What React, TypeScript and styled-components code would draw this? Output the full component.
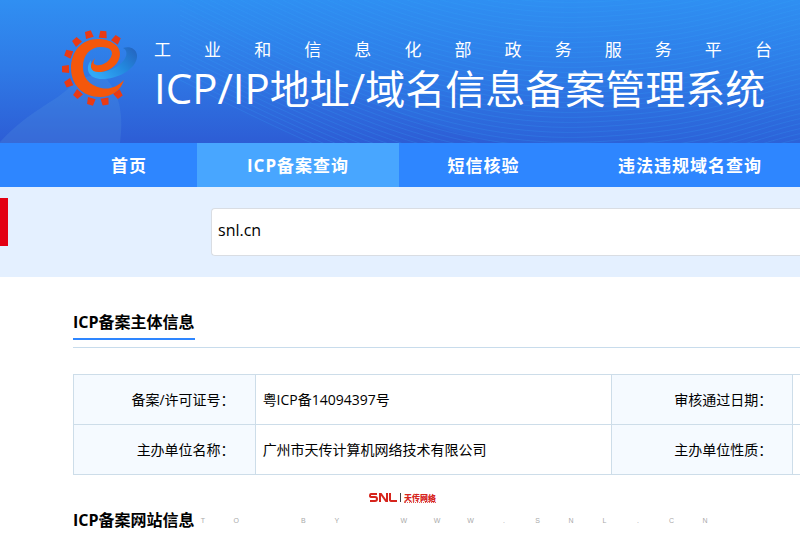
import React from "react";
import styled, { createGlobalStyle } from "styled-components";

const GlobalStyle = createGlobalStyle`
  * { box-sizing: border-box; }
  html { overflow: hidden; }
  body {
    margin: 0;
    background: #fff;
    color: #000;
    font-family: "Open Sans", "Noto Sans CJK SC", sans-serif;
    font-size: 14px;
  }
`;

const Page = styled.div`
  position: relative;
  overflow: hidden;
  height: 100vh;
`;

const Banner = styled.header`
  position: relative;
  display: flex;
  height: 143px;
  padding: 28px 24px 0 62px;
  background: linear-gradient(180deg, #308ff2 0%, #2f7ae6 48%, #2d5dd5 100%);
  color: #fff;
`;

const BannerArt = styled.svg`
  position: absolute;
  inset: 0;
  width: 100%;
  height: 100%;
`;

const Emblem = styled.svg`
  position: relative;
  flex: none;
  width: 80px;
  height: 80px;
`;

const Titles = styled.div`
  position: relative;
  flex: none;
  margin-left: 12px;
  white-space: nowrap;
`;

const Ministry = styled.div`
  display: flex;
  justify-content: space-between;
  width: 618px;
  margin-top: 10px;
  font-size: 17px;
  line-height: 24px;
`;

const SystemName = styled.h1`
  margin: 0;
  font-size: 40px;
  font-weight: 400;
  line-height: 52px;
`;

const Latin = styled.span`
  font-size: 42px;
`;

const Nav = styled.nav`
  display: grid;
  grid-template-columns: 61px 136px 202px 169px minmax(244px, 1fr);
  height: 44px;
  background: #2e86ff;
`;

const NavLink = styled.a<{ $active?: boolean }>`
  display: flex;
  align-items: center;
  justify-content: center;
  padding-bottom: 2px;
  background: ${(p) => (p.$active ? "#48a6ff" : "transparent")};
  color: #fff;
  font-size: 17px;
  font-weight: 700;
  letter-spacing: 1px;
  text-decoration: none;
  white-space: nowrap;
`;

const SearchBand = styled.form`
  display: flex;
  align-items: flex-start;
  height: 90px;
  background: #e4f0ff;
`;

const SideTab = styled.div`
  flex: none;
  width: 8px;
  height: 48px;
  margin-top: 11px;
  background: #e30013;
`;

const SearchInput = styled.input`
  flex: 1;
  min-width: 0;
  height: 48px;
  margin: 21px 0 0 203px;
  padding: 0 6px 4px;
  border: 1px solid #d9dde3;
  border-right: 0;
  border-radius: 4px 0 0 4px;
  background: #fff;
  color: #000;
  font: inherit;
  font-size: 16px;
  outline: none;
`;

const Content = styled.main`
  padding: 32px 0 0 73px;
`;

const SectionHeader = styled.div`
  display: flex;
  height: 39px;
  border-bottom: 1px solid #c8dcec;
`;

const SectionTitle = styled.h2<{ $marked?: boolean }>`
  margin: 0;
  height: 31px;
  border-bottom: ${(p) => (p.$marked ? "2px solid #2e86ff" : "0")};
  font-size: 16px;
  font-weight: 700;
  line-height: 26px;
  white-space: nowrap;
`;

const InfoTable = styled.table`
  width: 100%;
  margin: 26px 0 32px;
  border-collapse: collapse;
  table-layout: fixed;
`;

const Column = styled.col<{ $share?: string }>`
  width: ${(p) => p.$share ?? "auto"};
`;

const Row = styled.tr`
  height: 50px;
`;

const cell = `
  padding-top: 0;
  padding-bottom: 0;
  border: 1px solid #cddde9;
  font-size: 14px;
  line-height: 20px;
  white-space: nowrap;
`;

const Label = styled.th`
  ${cell}
  padding-right: 20px;
  background: #f5faff;
  font-weight: 400;
  text-align: right;
`;

const Value = styled.td`
  ${cell}
  padding-left: 7px;
  border-right: 0;
`;

const Watermark = styled.div`
  position: absolute;
  top: 491px;
  left: 65px;
  width: 644px;
`;

const Brand = styled.div`
  display: flex;
  align-items: center;
  gap: 3px;
  height: 13px;
  margin-left: 304px;
  color: #d6251d;
  font-size: 8px;
  font-weight: 900;
`;

const SnlMark = styled.svg`
  width: 28px;
  height: 9px;
`;

const BrandRule = styled.span`
  width: 1px;
  height: 9px;
  background: #444;
`;

const BrandName = styled.span`
  border-bottom: 1px dotted #e0605a;
  line-height: 9px;
`;

const Credit = styled.div`
  display: flex;
  justify-content: space-between;
  margin-top: 12px;
  color: #aaa;
  font: 7px/10px "Liberation Sans", sans-serif;
`;

const Letter = styled.span`
  width: 8px;
  text-align: center;
`;

const waves = Array.from({ length: 44 }, (_, i) => {
  const y = i * 5 - 70;
  return `M180 ${y - 65} C330 ${y + 10} 450 ${y + 68} 590 ${y + 62} S750 ${y + 30} 830 ${y + 18}`;
});

const teeth = [
  [27, 7, -17],
  [41, 7, 5],
  [54, 12, 33],
  [15, 14, -42],
  [7, 26, -70],
  [4, 41, -92],
  [7, 55, -115],
  [16, 66, -137],
  [29, 73, -165],
  [43, 73, 171],
  [56, 66, 145],
];

function Logo() {
  return (
    <Emblem viewBox="0 0 80 80" aria-hidden="true">
      <defs>
        <linearGradient id="swoosh" x1="0" x2="1" y1="0.6" y2="0">
          <stop offset="0" stopColor="#32a9f7" />
          <stop offset="0.5" stopColor="#2389df" />
          <stop offset="1" stopColor="#2461bd" />
        </linearGradient>
      </defs>
      <path
        d="M29 32C22 41 27 52 42 51C59 50 76 39 75 27C74 20 67 18 61 20C67 23 65 31 57 37C48 44 28 50 29 32Z"
        fill="url(#swoosh)"
      />
      {teeth.map(([x, y, r]) => (
        <path
          key={`${x}-${y}`}
          transform={`translate(${x} ${y}) rotate(${r})`}
          d="M-3 -4H3L4 3H-4Z"
          fill="#e93a14"
        />
      ))}
      <path
        d="M33 30C26 38 28 45 39 44C49 43 58 35 58 26C58 17 48 11 36 11C19 11 9 24 9 40C9 57 21 69 38 69C50 69 59 62 62 52C55 59 47 62 39 60C27 57 21 50 21 39C21 27 28 19 39 19C48 19 52 23 49 29C46 35 39 38 34 37C31 36 31 34 33 30Z"
        fill="#f4570b"
      />
    </Emblem>
  );
}

export default function App() {
  return (
    <>
      <GlobalStyle />
      <Page>
        <Banner>
          <BannerArt viewBox="0 0 800 143" preserveAspectRatio="none" aria-hidden="true">
            <path d="M170 0C290 60 380 120 500 143H800V0Z" fill="#2c98fa" opacity="0.1" />
            <path
              d="M0 142C30 110 55 102 70 87C84 75 93 75 102 75C120 90 124 116 120 143H0Z"
              fill="#60a0e0"
              opacity="0.2"
            />
            {waves.map((d) => (
              <path key={d} d={d} fill="none" stroke="#38a8fa" strokeWidth="1" opacity="0.2" />
            ))}
          </BannerArt>
          <Logo />
          <Titles>
            <Ministry>
              {[..."工业和信息化部政务服务平台"].map((c, i) => (
                <span key={i}>{c}</span>
              ))}
            </Ministry>
            <SystemName>
              <Latin>ICP/IP</Latin>地址<Latin>/</Latin>域名信息备案管理系统
            </SystemName>
          </Titles>
        </Banner>
        <Nav>
          <span />
          <NavLink href="#home">首页</NavLink>
          <NavLink href="#query" $active>
            ICP备案查询
          </NavLink>
          <NavLink href="#sms">短信核验</NavLink>
          <NavLink href="#illegal">违法违规域名查询</NavLink>
        </Nav>
        <SearchBand>
          <SideTab />
          <SearchInput aria-label="备案查询" defaultValue="snl.cn" />
        </SearchBand>
        <Content>
          <SectionHeader>
            <SectionTitle $marked>ICP备案主体信息</SectionTitle>
          </SectionHeader>
          <InfoTable>
            <colgroup>
              <Column $share="25%" />
              <Column $share="49%" />
              <Column $share="25%" />
              <Column />
            </colgroup>
            <tbody>
              <Row>
                <Label scope="row">备案/许可证号：</Label>
                <Value>粤ICP备14094397号</Value>
                <Label scope="row">审核通过日期：</Label>
                <Value />
              </Row>
              <Row>
                <Label scope="row">主办单位名称：</Label>
                <Value>广州市天传计算机网络技术有限公司</Value>
                <Label scope="row">主办单位性质：</Label>
                <Value />
              </Row>
            </tbody>
          </InfoTable>
          <SectionTitle>ICP备案网站信息</SectionTitle>
        </Content>
        <Watermark>
          <Brand>
            <SnlMark viewBox="0 0 28 9" role="img" aria-label="SNL">
              <path
                d="M8 1H2Q1 1 1 3Q1 4 3 4H6Q8 4 8 6Q8 8 6 8H1M11 9V1H12L17 8H18V0M21 0V7Q21 8 23 8H28"
                fill="none"
                stroke="currentColor"
                strokeWidth="2"
              />
            </SnlMark>
            <BrandRule />
            <BrandName>天传网络</BrandName>
          </Brand>
          <Credit>
            {[..." PHOTO BY WWW.SNL.CN"].map((c, i) => (
              <Letter key={i}>{c}</Letter>
            ))}
          </Credit>
        </Watermark>
      </Page>
    </>
  );
}
